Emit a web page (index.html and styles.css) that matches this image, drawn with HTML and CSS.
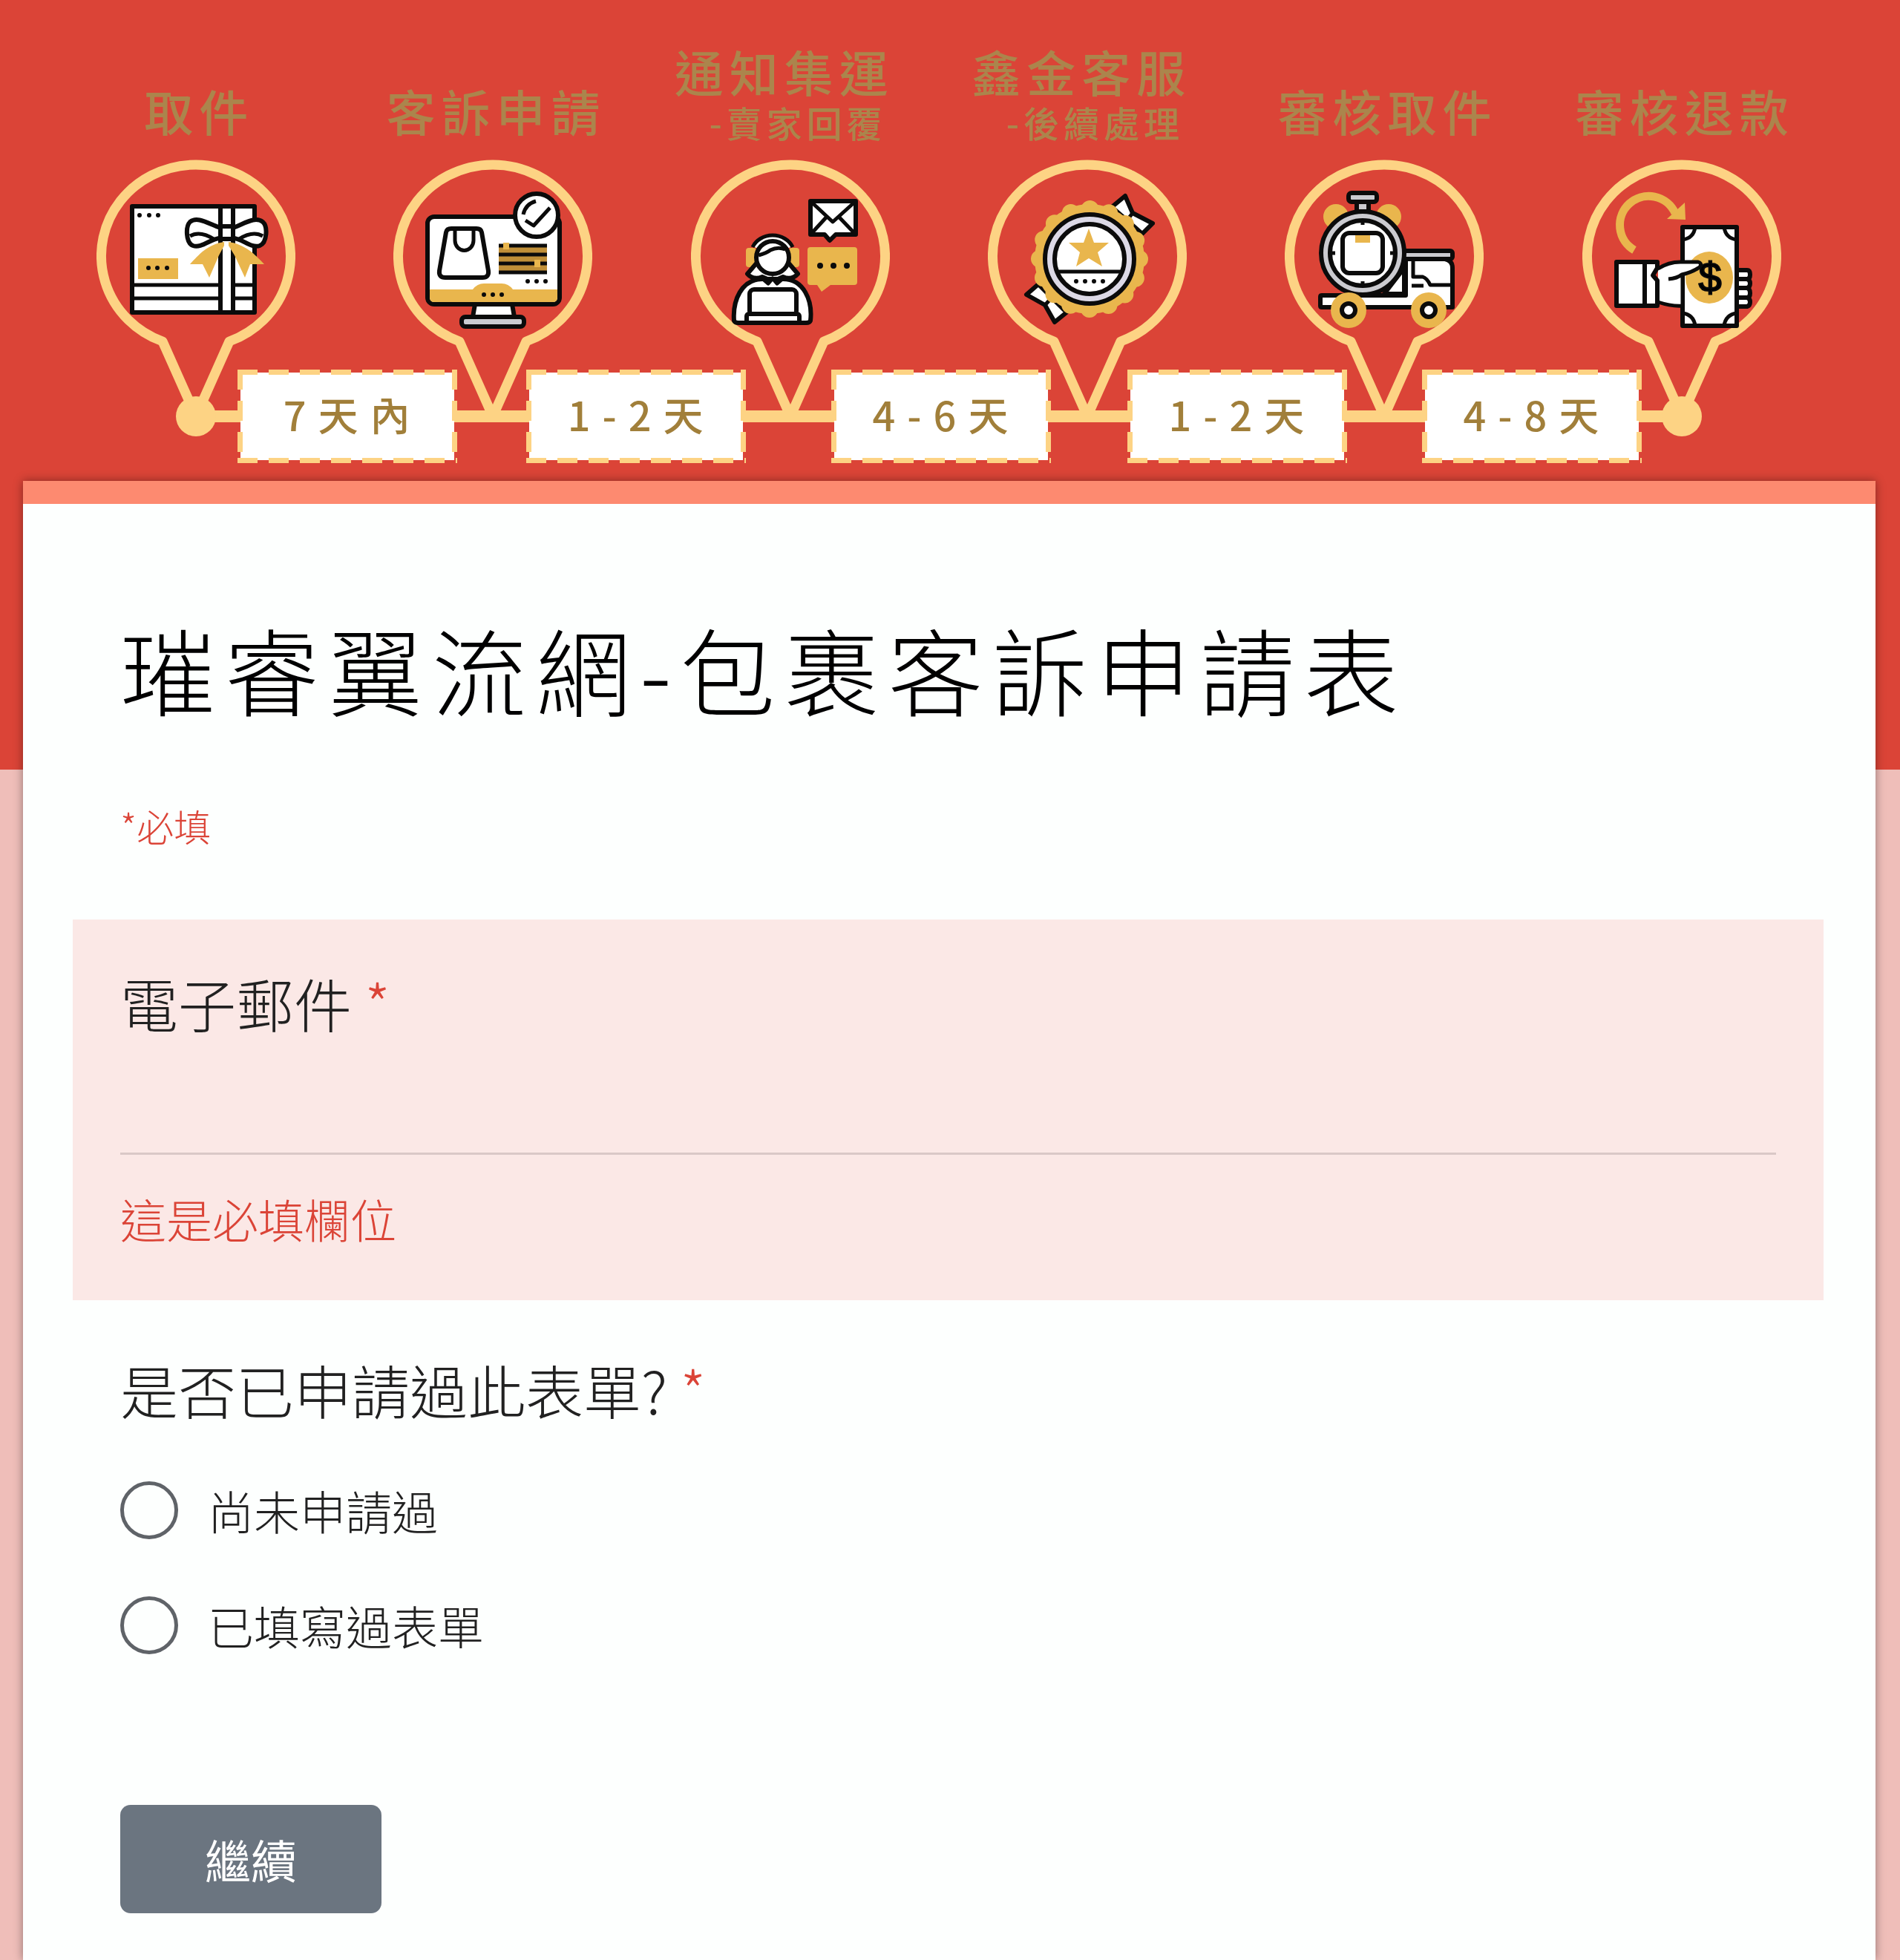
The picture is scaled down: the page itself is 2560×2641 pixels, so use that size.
FILE: index.html
```html
<!DOCTYPE html>
<html lang="zh-Hant">

<head>
    <meta charset="UTF-8">
    <meta name="viewport" content="width=device-width, initial-scale=1.0">
    <title>璀睿翼流網-包裹客訴申請表</title>
    <link rel="stylesheet" href="styles.css">
</head>

<body>

    <header class="banner">
        <ol class="steps">
            <li class="step">
                <p class="step-name">取件</p>
                <svg class="pin" viewBox="0 0 268 360" aria-hidden="true">
                    <path class="outline" d="M134 346L89 245A127.500 123 0 1 1 179 245Z" />
                    <rect class="ink" x="48" y="63" width="165" height="143" />
                    <path class="line" d="M48 169H213M48 187H213" />
                    <rect class="ink" x="167" y="63" width="17" height="143" />
                    <path class="gold" d="M172 111C150 114 138 128 126 141L143 141L152 159L165 129L172 116ZM178 111C200 114 214 128 226 141L207 141L200 159L186 129L178 116Z" />
                    <path class="ink" d="M167 92C150 86 136 76 126 84C120 90 120 112 130 116C142 120 154 106 167 106ZM184 92C200 86 214 76 224 84C231 90 230 112 220 116C208 120 196 106 184 106Z" />
                    <path class="line" d="M126 103C138 96 150 102 158 107M224 103C212 96 200 102 192 107" />
                    <rect class="ink" x="167" y="90" width="17" height="17" rx="3" />
                    <path class="dots" d="M58 75h0M71 75h0M83 75h0" />
                    <rect class="gold" x="56" y="133" width="54" height="28" />
                    <path class="dots" d="M70 146h0M82 146h0M95 146h0" />
                </svg>
            </li>
            <li class="step">
                <p class="step-name">客訴申請</p>
                <svg class="pin" viewBox="0 0 268 360" aria-hidden="true">
                    <path class="outline" d="M134 346L89 245A127.500 123 0 1 1 179 245Z" />
                    <path class="ink" d="M110 195H160L163 212H107Z" />
                    <rect class="ink grey" x="92" y="212" width="84" height="13" rx="5" />
                    <rect class="ink" x="46" y="77" width="178" height="118" rx="9" />
                    <path class="gold" d="M49 175H107Q113 167 122 167H146Q155 167 161 175H221V186Q221 192 215 192H55Q49 192 49 186Z" />
                    <path class="dots" d="M122 182h0M134 182h0M146 182h0" />
                    <path class="ink" d="M78 93H112Q118 93 119 98L128 150Q129 159 120 159H70Q61 159 62 150L71 98Q72 93 78 93Z" />
                    <path class="line" d="M83 94V109A12 13 0 0 0 108 109V94" />
                    <path class="dark-gold" d="M142 116H207V152H142Z" />
                    <path class="line" d="M142 116H207M142 128H207M142 140H207M142 152H207" />
                    <path class="gold" d="M148 112H156V121H148ZM190 135H198V145H190Z" />
                    <path class="dots" d="M181 164h0M193 164h0M205 164h0" />
                    <circle class="ink" cx="193" cy="75" r="29" />
                    <path class="line" d="M175 74Q178 60 192 56M178 82L189 89L211 65" />
                </svg>
            </li>
            <li class="step">
                <p class="step-name two-lines">通知集運<small>-賣家回覆</small></p>
                <svg class="pin" viewBox="0 0 268 360" aria-hidden="true">
                    <path class="outline" d="M134 346L89 245A127.500 123 0 1 1 179 245Z" />
                    <rect class="gold" x="74" y="119" width="14" height="26" rx="4" />
                    <rect class="gold" x="132" y="119" width="14" height="26" rx="4" />
                    <path class="ink" d="M88 140L76 154Q84 163 96 158L110 164L124 158Q136 163 144 154L132 140Z" />
                    <path class="ink" d="M58 217C56 190 68 161 96 161H124C152 161 164 190 161 217Q160 220 155 220H64Q59 220 58 217Z" />
                    <path class="line" d="M96 160L104 167L110 160L116 167L124 160" />
                    <path class="ink no-line" d="M83 117A29 25 0 0 1 137 117L129 120H91Z" />
                    <path class="line" d="M83 118A29 25 0 0 1 137 118" />
                    <circle class="ink" cx="110" cy="132" r="22" />
                    <path class="line" d="M91 129Q102 126 107 122Q117 117 127 121" />
                    <rect class="ink" x="79" y="175" width="63" height="35" rx="6" />
                    <rect class="ink" x="75" y="208" width="71" height="12" rx="3" />
                    <path class="ink" d="M161 56H222V101H195L187 109L180 101H161Z" />
                    <path class="line" d="M161 56L191 84L222 56M161 101L183 77M222 101L199 77" />
                    <path class="gold" d="M161 118H220Q224 118 224 122V165Q224 169 220 169H188L176 178L170 169H161Q157 169 157 165V122Q157 118 161 118Z" />
                    <path class="dots big" d="M174 143h0M192 143h0M210 143h0" />
                </svg>
            </li>
            <li class="step">
                <p class="step-name two-lines">鑫金客服<small>-後續處理</small></p>
                <svg class="pin" viewBox="0 0 268 360" aria-hidden="true">
                    <path class="outline" d="M134 346L89 245A127.500 123 0 1 1 179 245Z" />
                    <path class="ink" d="M167 64L185 49L195 72L222 86L208 100Z" />
                    <path class="ink" d="M68 168L52 182L77 196L90 219L106 206Z" />
                    <path class="line" d="M195 72L186 84M77 196L88 184" />
                    <circle class="gold" cx="137" cy="134" r="74" />
                    <circle class="scallop" cx="137" cy="134" r="67" />
                    <circle class="ink lilac" cx="137" cy="134" r="60" />
                    <circle class="ink" cx="137" cy="134" r="47" />
                    <path class="line" d="M94 151H180" />
                    <path class="gold" d="M136 93L143 112L163 112L148 125L154 144L136 133L119 144L124 125L109 112L129 112Z" />
                    <path class="dots" d="M119 164h0M131 164h0M143 164h0M155 164h0" />
                </svg>
            </li>
            <li class="step">
                <p class="step-name">審核取件</p>
                <svg class="pin" viewBox="0 0 268 360" aria-hidden="true">
                    <path class="outline" d="M134 346L89 245A127.500 123 0 1 1 179 245Z" />
                    <circle class="gold" cx="69" cy="77" r="17" />
                    <circle class="gold" cx="140" cy="77" r="17" />
                    <path class="ink" d="M163 134H216Q226 136 226 146V199H50Q48 199 48 197V185Q48 183 50 183H163Z" />
                    <path class="ink" d="M134 181L161 146V181Z" />
                    <rect class="ink grey" x="157" y="123" width="69" height="11" rx="3" />
                    <path class="line" d="M173 136V158H186Q192 160 196 169H225M171 170H187" />
                    <rect class="ink grey" x="97" y="56" width="16" height="14" />
                    <rect class="ink grey" x="86" y="45" width="38" height="12" rx="4" />
                    <circle class="ink grey" cx="105" cy="126" r="56" />
                    <circle class="ink" cx="105" cy="126" r="44" />
                    <path class="line" d="M105 82V88M105 164V170M61 126H68M142 126H149" />
                    <rect class="ink" x="78" y="99" width="54" height="54" rx="9" />
                    <rect class="gold" x="95" y="102" width="20" height="10" />
                    <circle class="gold" cx="86" cy="203" r="24" />
                    <circle class="gold" cx="194" cy="203" r="24" />
                    <circle class="ink" cx="86" cy="203" r="9" />
                    <circle class="ink" cx="194" cy="203" r="9" />
                </svg>
            </li>
            <li class="step">
                <p class="step-name">審核退款</p>
                <svg class="pin" viewBox="0 0 268 360" aria-hidden="true">
                    <path class="outline" d="M134 346L89 245A127.500 123 0 1 1 179 245Z" />
                    <path class="arrow" d="M70 122A39 39 0 1 1 125 72" />
                    <path class="gold" d="M138 58L139 81L114 80Z" />
                    <path class="ink" d="M206 149H222Q226 149 226 155T222 161Q226 162 226 167T222 173Q226 174 226 180T222 186Q226 187 226 192T222 198H206ZM206 161H222M206 173H222M206 186H222" />
                    <rect class="ink" x="135" y="91" width="73" height="133" />
                    <path class="line" d="M135 108Q150 106 152 91M191 91Q193 106 208 108M135 207Q150 209 152 224M191 224Q193 209 208 207" />
                    <ellipse class="gold" cx="171" cy="159" rx="32" ry="35" />
                    <path class="ink no-line" d="M102 146Q116 138 135 138L156 138Q162 140 158 146L135 155V197Q122 198 102 191Z" />
                    <path class="line" d="M135 197Q120 198 102 192M102 147Q116 138 132 138L156 138Q162 140 158 145Q148 152 134 155Q128 160 116 161M135 155V197" />
                    <rect class="ink" x="46" y="138" width="38" height="59" />
                    <path class="ink" d="M84 138H101V146L95 156L101 163V197H84Z" />
                    <text class="dollar" x="172" y="178" text-anchor="middle">$</text>
                </svg>
            </li>
        </ol>
        <div class="timeline">
            <span class="period">7天內</span>
            <span class="period">1-2天</span>
            <span class="period">4-6天</span>
            <span class="period">1-2天</span>
            <span class="period">4-8天</span>
        </div>
    </header>

    <main class="card">
        <form id="complaintForm">
            <h1>璀睿翼流網-包裹客訴申請表</h1>
            <p class="required-note">*必填</p>

            <div class="question error">
                <label class="question-title" for="email">電子郵件 <span class="star">*</span></label>
                <input type="email" id="email" name="email">
                <p class="error-message">這是必填欄位</p>
            </div>

            <fieldset class="question">
                <legend class="question-title">是否已申請過此表單? <span class="star">*</span></legend>
                <div class="options">
                    <label class="option" for="applied1">
                        <input type="radio" id="applied1" name="applied" value="no">尚未申請過
                    </label>
                    <label class="option" for="applied2">
                        <input type="radio" id="applied2" name="applied" value="yes">已填寫過表單
                    </label>
                </div>
            </fieldset>

            <div class="actions">
                <button type="button">繼續</button>
            </div>
        </form>
    </main>

</body>

</html>
```
FILE: styles.css
```css
* {
    box-sizing: border-box;
}

body {
    margin: 0;
    font-family: "Noto Sans CJK TC", sans-serif;
    font-weight: 300;
    color: #212121;
    background: linear-gradient(#db4437 1037px, #efbeb9 1037px);
}

h1,
p {
    margin: 0;
}

/* banner */

.banner {
    padding: 0 94px 24px 64px;
}

.steps {
    display: grid;
    grid-template-columns: repeat(6, 1fr);
    margin: 0;
    padding: 0;
    list-style: none;
}

.step {
    display: flex;
    flex-direction: column;
    align-items: center;
}

.step-name {
    display: flex;
    flex-direction: column;
    justify-content: flex-end;
    height: 215px;
    padding: 0 0 31px 8px;
    color: #ab854c;
    font-size: 66px;
    font-weight: 500;
    line-height: 72px;
    letter-spacing: 8px;
    text-align: right;
}

.two-lines {
    padding: 0 16px 24px 0;
}

.step-name small {
    margin-top: 6px;
    padding-right: 10px;
    font-size: 48px;
    line-height: 54px;
    letter-spacing: 6px;
}

.pin {
    display: block;
    width: 268px;
    height: 360px;
}

.outline {
    fill: none;
    stroke: #fdd384;
    stroke-width: 13;
    stroke-linejoin: round;
}

.ink {
    fill: #fff;
    stroke: #0b0b0b;
    stroke-width: 6;
    stroke-linejoin: round;
}

.grey {
    fill: #cbcbd0;
}

.lilac {
    fill: #dcd9e6;
}

.no-line {
    stroke: none;
}

.line {
    fill: none;
    stroke: #0b0b0b;
    stroke-width: 5;
    stroke-linejoin: round;
}

.gold {
    fill: #e9b64d;
}

.dark-gold {
    fill: #c08f38;
}

.dots {
    stroke: #0b0b0b;
    stroke-width: 6;
    stroke-linecap: round;
}

.big {
    stroke-width: 8;
}

.scallop {
    fill: none;
    stroke: #e9b64d;
    stroke-width: 24;
    stroke-linecap: round;
    stroke-dasharray: 0 26.311;
}

.arrow {
    fill: none;
    stroke: #e9b64d;
    stroke-width: 11;
}

.dollar {
    font-family: "Liberation Sans", sans-serif;
    font-size: 56px;
    font-weight: 400;
    stroke: #0b0b0b;
    stroke-width: 2;
}

/* the line that joins the pins, with the waiting times on it */

.timeline {
    position: relative;
    display: grid;
    grid-template-columns: 56fr 296fr 93fr 296fr 115fr 296fr 103fr 296fr 101fr 296fr 54fr;
    margin: -77px calc(100% / 12) 0;
    background: linear-gradient(#fdd384, #fdd384) center / 100% 16px no-repeat;
}

.timeline::before,
.timeline::after {
    content: "";
    position: absolute;
    top: 36px;
    width: 54px;
    height: 54px;
    border-radius: 50%;
    background: #fdd384;
}

.timeline::before {
    left: -27px;
}

.timeline::after {
    right: -27px;
}

/* long dashes that sit half outside the white box */
.period {
    height: 126px;
    padding-left: 14px;
    background:
        repeating-linear-gradient(90deg, #fdd384 0 27px, transparent 27px 42px) top / 100% 7px no-repeat,
        repeating-linear-gradient(90deg, #fdd384 0 27px, transparent 27px 42px) bottom / 100% 7px no-repeat,
        repeating-linear-gradient(#fdd384 0 27px, transparent 27px 42px) left / 7px 100% no-repeat,
        repeating-linear-gradient(#fdd384 0 27px, transparent 27px 42px) right / 7px 100% no-repeat,
        linear-gradient(#fff, #fff) center / calc(100% - 8px) calc(100% - 8px) no-repeat;
    color: #a17f3a;
    font-size: 54px;
    font-weight: 500;
    line-height: 120px;
    letter-spacing: 16px;
    text-align: center;
}

.period:nth-child(1) {
    grid-column: 2;
}

.period:nth-child(2) {
    grid-column: 4;
}

.period:nth-child(3) {
    grid-column: 6;
}

.period:nth-child(4) {
    grid-column: 8;
}

.period:nth-child(5) {
    grid-column: 10;
}

/* form */

.card {
    margin: 0 33px 0 31px;
    padding: 142px 70px 63px 67px;
    border-top: 31px solid #fd8a70;
    background: #fdfffe;
    box-shadow: 0 0 12px rgba(0, 0, 0, 0.4);
}

h1 {
    padding: 0 64px;
    color: #000;
    font-size: 128px;
    font-weight: 300;
    line-height: 160px;
    letter-spacing: 12px;
}

.required-note {
    margin: 101px 0 97px;
    padding: 0 64px;
    color: #db4437;
    font-size: 50px;
    line-height: 60px;
}

.question {
    margin: 70px 0 0;
    padding: 0 64px;
    border: none;
}

.error {
    margin: 0;
    padding: 62px 64px 70px;
    background: #fbe8e6;
}

.question-title {
    display: block;
    padding: 0;
    font-size: 78px;
    line-height: 100px;
}

.star {
    color: #db4437;
}

input[type="email"] {
    display: block;
    width: 100%;
    height: 155px;
    padding: 60px 0 10px;
    border: none;
    border-bottom: 3px solid #dac8c7;
    background: none;
    font: inherit;
    font-size: 62px;
    outline: none;
}

.error-message {
    margin-top: 46px;
    color: #db4437;
    font-size: 62px;
    line-height: 80px;
}

.options {
    display: flex;
    flex-direction: column;
    align-items: flex-start;
    gap: 77px;
    padding-top: 74px;
}

.option {
    display: flex;
    align-items: center;
    gap: 40px;
    font-size: 62px;
    line-height: 78px;
}

input[type="radio"] {
    appearance: none;
    width: 78px;
    height: 78px;
    margin: 0;
    border: 5px solid #5f6368;
    border-radius: 50%;
}

input[type="radio"]:checked {
    background: radial-gradient(#db4437 45%, transparent 47%);
}

.actions {
    margin-top: 203px;
    padding: 0 64px;
}

button {
    display: block;
    padding: 33px 114px;
    border: none;
    border-radius: 14px;
    background: #6b7580;
    color: #fff;
    font: inherit;
    font-size: 62px;
    font-weight: 400;
    line-height: 80px;
    cursor: pointer;
}

button:hover {
    background: #5d6770;
}
```
